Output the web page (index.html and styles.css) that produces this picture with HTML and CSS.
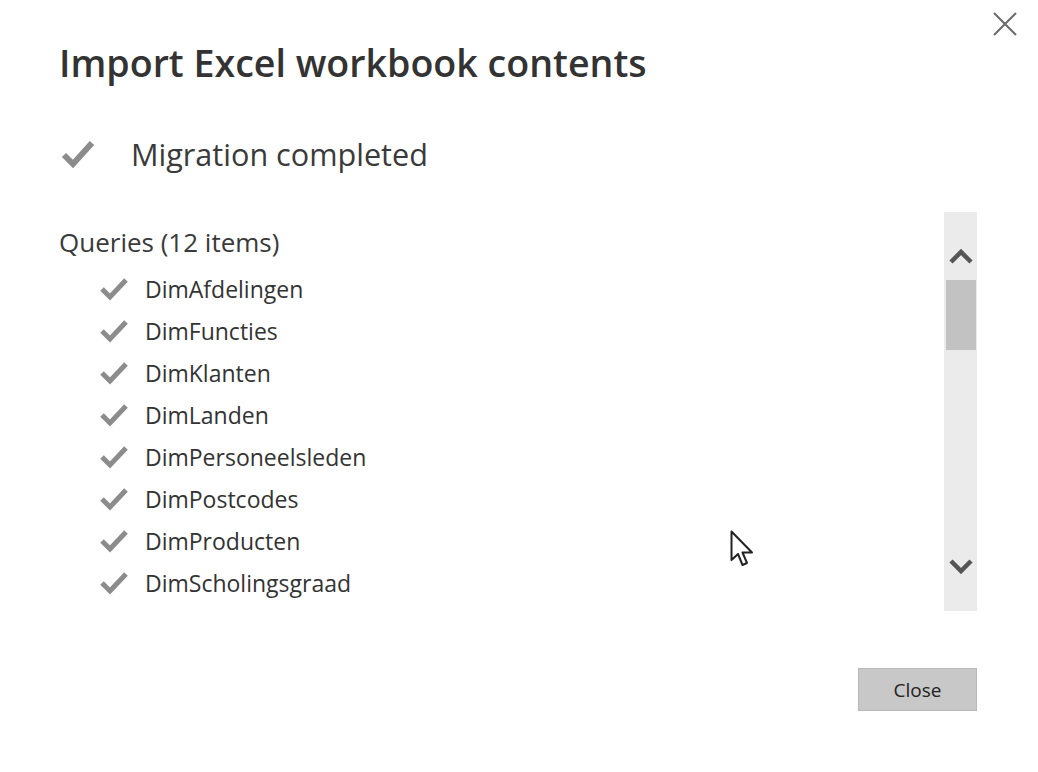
FILE: index.html
```html
<!DOCTYPE html>
<html>
<head>
<meta charset="utf-8">
<link rel="stylesheet" href="styles.css">
</head>
<body>
<div class="dialog">
  <button class="close-x" aria-label="Close">
    <svg width="24" height="24" viewBox="0 0 24 24"><path d="M1 1 L23 23 M23 1 L1 23" stroke="#6a6a6a" stroke-width="2" fill="none"/></svg>
  </button>
  <h1 class="title">Import Excel workbook contents</h1>
  <div class="status">
    <svg class="check-lg" width="34" height="30" viewBox="0 0 34 30"><path d="M3 16 L12 25 L31 4" stroke="#8c8c8c" stroke-width="6" fill="none"/></svg>
    <span class="status-text">Migration completed</span>
  </div>
  <div class="panel">
    <div class="list">
      <div class="list-head">Queries (12 items)</div>
      <ul class="items">
        <li><svg class="check" width="28" height="24" viewBox="0 0 28 24"><path d="M2 12 L10 20 L26 3" stroke="#8c8c8c" stroke-width="5" fill="none"/></svg><span>DimAfdelingen</span></li>
        <li><svg class="check" width="28" height="24" viewBox="0 0 28 24"><path d="M2 12 L10 20 L26 3" stroke="#8c8c8c" stroke-width="5" fill="none"/></svg><span>DimFuncties</span></li>
        <li><svg class="check" width="28" height="24" viewBox="0 0 28 24"><path d="M2 12 L10 20 L26 3" stroke="#8c8c8c" stroke-width="5" fill="none"/></svg><span>DimKlanten</span></li>
        <li><svg class="check" width="28" height="24" viewBox="0 0 28 24"><path d="M2 12 L10 20 L26 3" stroke="#8c8c8c" stroke-width="5" fill="none"/></svg><span>DimLanden</span></li>
        <li><svg class="check" width="28" height="24" viewBox="0 0 28 24"><path d="M2 12 L10 20 L26 3" stroke="#8c8c8c" stroke-width="5" fill="none"/></svg><span>DimPersoneelsleden</span></li>
        <li><svg class="check" width="28" height="24" viewBox="0 0 28 24"><path d="M2 12 L10 20 L26 3" stroke="#8c8c8c" stroke-width="5" fill="none"/></svg><span>DimPostcodes</span></li>
        <li><svg class="check" width="28" height="24" viewBox="0 0 28 24"><path d="M2 12 L10 20 L26 3" stroke="#8c8c8c" stroke-width="5" fill="none"/></svg><span>DimProducten</span></li>
        <li><svg class="check" width="28" height="24" viewBox="0 0 28 24"><path d="M2 12 L10 20 L26 3" stroke="#8c8c8c" stroke-width="5" fill="none"/></svg><span>DimScholingsgraad</span></li>
      </ul>
    </div>
    <div class="scrollbar">
      <div class="arrow up"><svg width="24" height="16" viewBox="0 0 24 16"><path d="M2 14 L12 4 L22 14" stroke="#555" stroke-width="4.5" fill="none"/></svg></div>
      <div class="thumb"></div>
      <div class="arrow down"><svg width="24" height="16" viewBox="0 0 24 16"><path d="M2 2 L12 12 L22 2" stroke="#555" stroke-width="4.5" fill="none"/></svg></div>
    </div>
  </div>
  <div class="footer">
    <button class="btn">Close</button>
  </div>
  <svg class="cursor" width="26" height="38" viewBox="0 0 26 38"><path d="M1.5 1.5 L1.5 30 L8 24 L12.5 35 L17 33 L12.5 22.5 L22 22.5 Z" fill="#fff" stroke="#222" stroke-width="2" stroke-linejoin="round"/></svg>
</div>
</body>
</html>
```
FILE: styles.css
```css
html, body {
  margin: 0;
  padding: 0;
  background: #ffffff;
}
body {
  font-family: "Open Sans", "Noto Sans", sans-serif;
  color: #333333;
}
.dialog {
  position: relative;
  width: 1038px;
  height: 772px;
  box-sizing: border-box;
  padding: 38px 61px 0 59px;
  display: flex;
  flex-direction: column;
}
.close-x {
  position: absolute;
  top: 12px;
  right: 21px;
  width: 24px;
  height: 24px;
  padding: 0;
  border: 0;
  background: none;
}
.close-x svg { display: block; }
.title {
  margin: 0;
  font-size: 37.6px;
  font-weight: 600;
  line-height: 50px;
  color: #333333;
  white-space: nowrap;
}
.status {
  display: flex;
  align-items: center;
  margin-top: 44px;
  height: 44px;
}
.check-lg {
  margin-left: 2px;
  margin-right: 36px;
  flex: none;
}
.status-text {
  font-size: 30.6px;
  line-height: 44px;
  color: #3a3a3a;
}
.panel {
  display: flex;
  margin-top: 36px;
  height: 399px;
}
.list {
  flex: 1;
  padding-top: 13px;
}
.list-head {
  font-size: 26px;
  line-height: 34px;
  color: #3a3a3a;
}
.items {
  list-style: none;
  margin: 15px 0 0 0;
  padding: 0 0 0 41px;
  display: flex;
  flex-direction: column;
  gap: 12px;
}
.items li {
  display: flex;
  align-items: center;
  height: 30px;
}
.check {
  flex: none;
  margin-right: 17px;
}
.items span {
  font-size: 23px;
  line-height: 30px;
  color: #333333;
}
.scrollbar {
  width: 33px;
  background: #ebebeb;
  display: flex;
  flex-direction: column;
}
.arrow {
  display: flex;
  justify-content: center;
  box-sizing: border-box;
}
.arrow.up {
  height: 68px;
  align-items: flex-end;
  padding-bottom: 16px;
}
.arrow.down {
  margin-top: auto;
  height: 52px;
  align-items: flex-start;
}
.thumb {
  height: 70px;
  background: #c2c2c2;
  margin: 0 1px 0 2px;
}
.footer {
  display: flex;
  justify-content: flex-end;
  margin-top: 57px;
}
.btn {
  width: 119px;
  height: 43px;
  background: #c8c8c8;
  border: 1px solid #b8b8b8;
  font-family: "Open Sans", "Noto Sans", sans-serif;
  font-size: 19px;
  color: #222222;
  padding: 0;
}
.cursor {
  position: absolute;
  left: 730px;
  top: 530px;
}
```
